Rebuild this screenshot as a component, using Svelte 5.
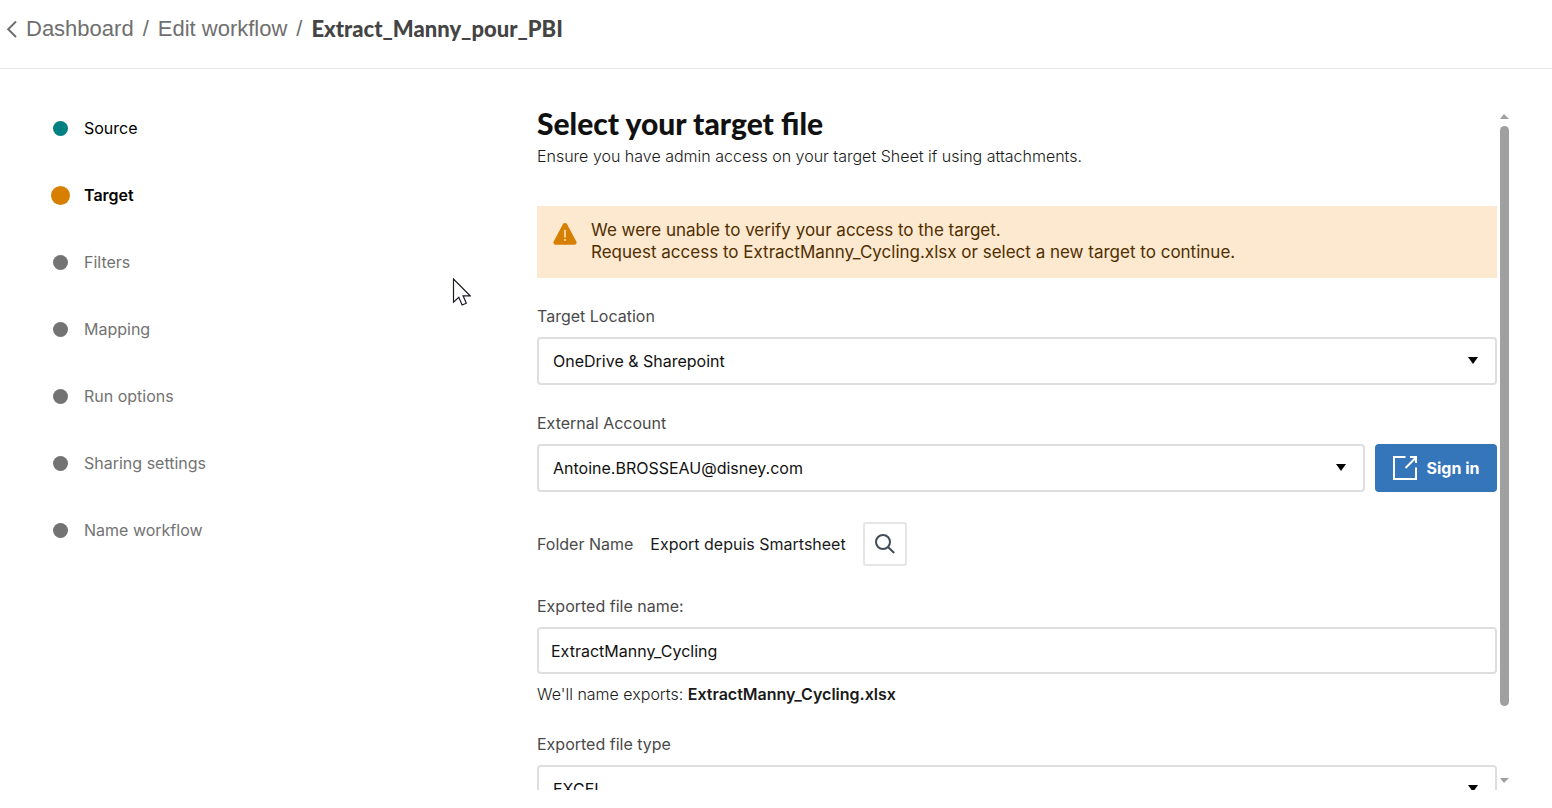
<script>
  let steps = [
    { name: "Source", state: "done" },
    { name: "Target", state: "active" },
    { name: "Filters", state: "" },
    { name: "Mapping", state: "" },
    { name: "Run options", state: "" },
    { name: "Sharing settings", state: "" },
    { name: "Name workflow", state: "" }
  ];
  let workflow = "Extract_Manny_pour_PBI";
  let location = "OneDrive & Sharepoint";
  let account = "Antoine.BROSSEAU@disney.com";
  let folder = "Export depuis Smartsheet";
  let fileName = "ExtractManny_Cycling";
  let fileType = "EXCEL";
</script>

<div class="page">
  <header>
    <nav class="breadcrumb" aria-label="Breadcrumb">
      <a href="#dashboard">
        <svg class="back" width="12" height="18" viewBox="0 0 12 18">
          <path d="M10 1.5 2.2 9.2 10 17" />
        </svg>
        Dashboard
      </a>
      <span class="slash">/</span>
      <a href="#edit">Edit workflow</a>
      <span class="slash">/</span>
      <strong>{workflow}</strong>
    </nav>
  </header>

  <div class="body">
    <ol class="steps">
      {#each steps as step}
        <li class={step.state}>
          <span class="dot"></span>
          <a href="#step">{step.name}</a>
        </li>
      {/each}
    </ol>

    <main>
      <h1>Select your target file</h1>
      <p class="intro">Ensure you have admin access on your target Sheet if using attachments.</p>

      <div class="alert" role="alert">
        <svg width="26" height="24" viewBox="0 0 26 24">
          <path
            d="M10.9 2.2a2.4 2.4 0 0 1 4.2 0l9.2 17.2a2.3 2.3 0 0 1-2 3.4H3.7a2.3 2.3 0 0 1-2-3.4z"
            fill="#d67f00" />
          <path d="M13 8.5v6.5" stroke="#fde8d0" stroke-width="1.6" stroke-linecap="round" />
          <circle cx="13" cy="18" r="1" fill="#fde8d0" />
        </svg>
        <p>
          We were unable to verify your access to the target.<br />
          Request access to {fileName}.xlsx or select a new target to continue.
        </p>
      </div>

      <div class="field">
        <label for="location">Target Location</label>
        <div class="select">
          <select id="location" bind:value={location}>
            <option>OneDrive & Sharepoint</option>
          </select>
        </div>
      </div>

      <div class="field">
        <label for="account">External Account</label>
        <div class="account">
          <div class="select">
            <select id="account" bind:value={account}>
              <option>Antoine.BROSSEAU@disney.com</option>
            </select>
          </div>
          <button class="sign-in">
            <svg width="24" height="24" viewBox="0 0 24 24">
              <path d="M12.5 1H1v22h22V11.5M12.5 12 23 1.5M17 1h6v6" />
            </svg>
            Sign in
          </button>
        </div>
      </div>

      <div class="folder">
        <span class="folder-label">Folder Name</span>
        <span>{folder}</span>
        <button class="search" aria-label="Search folder">
          <svg width="20" height="20" viewBox="0 0 20 20">
            <circle cx="8" cy="8" r="7" />
            <path d="M13 13l6.2 6" />
          </svg>
        </button>
      </div>

      <div class="field">
        <label for="file-name">Exported file name:</label>
        <input id="file-name" type="text" bind:value={fileName} />
        <p class="hint">We'll name exports: <b>{fileName}.xlsx</b></p>
      </div>

      <div class="field">
        <label for="file-type">Exported file type</label>
        <div class="select">
          <select id="file-type" bind:value={fileType}>
            <option>EXCEL</option>
          </select>
        </div>
      </div>
    </main>

    <div class="scrollbar">
      <span class="up"></span>
      <span class="thumb"></span>
      <span class="track"></span>
      <span class="down"></span>
    </div>
  </div>

  <svg class="cursor" width="19" height="29" viewBox="0 0 19 29">
    <path d="M1.5 1v23.2l5.3-5 3.3 7.8 4.2-1.8-3.2-7.4h7z" />
  </svg>
</div>

<style>
  :global(body) {
    margin: 0;
    background: #fff;
  }
  .page {
    height: 100vh;
    display: flex;
    flex-direction: column;
    box-sizing: border-box;
    padding-bottom: 18px;
    overflow: hidden;
    font-family: Inter, "Liberation Sans", sans-serif;
    font-size: 16px;
    line-height: 24px;
    color: #1a1a1a;
  }
  header {
    flex: none;
    padding: 14px 6px;
    border-bottom: 1px solid #e8e8e8;
  }
  .breadcrumb {
    display: flex;
    align-items: center;
    height: 30px;
    margin-bottom: 10px;
    gap: 9px;
    font-family: "Liberation Sans", Arial, sans-serif;
    font-size: 22px;
    color: #6f6f6f;
  }
  .breadcrumb a {
    display: flex;
    align-items: center;
    gap: 8px;
    color: inherit;
    text-decoration: none;
  }
  .breadcrumb strong {
    font-family: Lato, sans-serif;
    font-weight: 900;
    color: #444;
  }
  .back {
    fill: none;
    stroke: #6f6f6f;
    stroke-width: 2;
  }
  .body {
    flex: 1;
    min-height: 0;
    display: flex;
    padding-right: 43px;
  }
  .steps {
    flex: none;
    box-sizing: border-box;
    width: 537px;
    margin: 0;
    padding: 25px 0 0 51px;
    list-style: none;
  }
  .steps li {
    display: flex;
    align-items: center;
    gap: 14px;
    height: 67px;
    color: #737373;
  }
  .steps a {
    color: inherit;
    text-decoration: none;
  }
  .dot {
    width: 15px;
    height: 15px;
    margin: 2px 2px 0;
    border-radius: 50%;
    background: #737373;
  }
  .steps .done {
    color: #000;
  }
  .done .dot {
    background: #008080;
  }
  .steps .active {
    color: #000;
    font-weight: 600;
  }
  .active .dot {
    width: 19px;
    height: 19px;
    margin: 2px 0 0;
    background: #d67f00;
  }
  main {
    flex: 1;
    min-width: 0;
    padding-top: 37px;
    overflow: hidden;
  }
  h1 {
    margin: 0 0 4px;
    font-family: Lato, sans-serif;
    font-size: 30px;
    font-weight: 900;
    line-height: 34px;
    color: #111;
  }
  p {
    margin: 0;
  }
  .intro,
  .hint {
    font-weight: 300;
  }
  .alert {
    display: flex;
    gap: 13px;
    margin: 38px 0 26px;
    padding: 13px 15px 15px;
    background: #fde8d0;
    color: #4f2f00;
    font-size: 17px;
    font-weight: 400;
    line-height: 22px;
  }
  .alert svg {
    flex: none;
    margin-top: 3px;
  }
  .field {
    margin-bottom: 26px;
  }
  label {
    display: block;
    margin-bottom: 9px;
  }
  label,
  .folder-label {
    color: #4a4a4a;
  }
  .select {
    position: relative;
    flex: 1;
  }
  .select::after {
    content: "";
    position: absolute;
    right: 19px;
    top: 20px;
    border: 5px solid transparent;
    border-top: 7px solid #000;
    border-bottom: 0;
    pointer-events: none;
  }
  select,
  input {
    display: block;
    box-sizing: border-box;
    width: 100%;
    height: 48px;
    padding: 0 14px;
    border: 2px solid #dedede;
    border-radius: 4px;
    background: #fff;
    color: #111;
    font: inherit;
    appearance: none;
  }
  input {
    height: 47px;
    padding: 0 12px;
  }
  .account {
    display: flex;
    gap: 10px;
  }
  button {
    display: flex;
    align-items: center;
    justify-content: center;
    font: inherit;
  }
  button svg {
    fill: none;
  }
  .sign-in {
    gap: 10px;
    width: 122px;
    padding: 0;
    border: 0;
    border-radius: 4px;
    background: #3575ba;
    color: #fff;
    font-weight: 700;
  }
  .sign-in svg {
    stroke: #fff;
    stroke-width: 2;
  }
  .folder {
    display: flex;
    align-items: center;
    gap: 17px;
    margin: 30px 0 28px;
  }
  .search {
    width: 44px;
    height: 44px;
    padding: 0;
    border: 2px solid #e5e5e5;
    border-radius: 3px;
    background: #fff;
  }
  .search svg {
    stroke: #3f4c58;
    stroke-width: 2;
  }
  .hint {
    margin-top: 8px;
  }
  .hint b {
    font-weight: 600;
  }
  .scrollbar {
    display: flex;
    flex-direction: column;
    width: 9px;
    margin-left: 3px;
    padding: 45px 0 7px;
  }
  .up,
  .down {
    border: 0 solid transparent;
    border-width: 5px 5px 5px 4px;
  }
  .up {
    border-top: 0;
    border-bottom-color: #a0a0a0;
  }
  .down {
    border-bottom: 0;
    border-top-color: #a0a0a0;
  }
  .thumb {
    flex: 8;
    margin-top: 7px;
    border-radius: 5px;
    background: #a0a0a0;
  }
  .track {
    flex: 1;
  }
  .cursor {
    position: absolute;
    left: 452px;
    top: 278px;
    fill: #fff;
    stroke: #1c1c28;
    stroke-width: 1.2;
  }
</style>
